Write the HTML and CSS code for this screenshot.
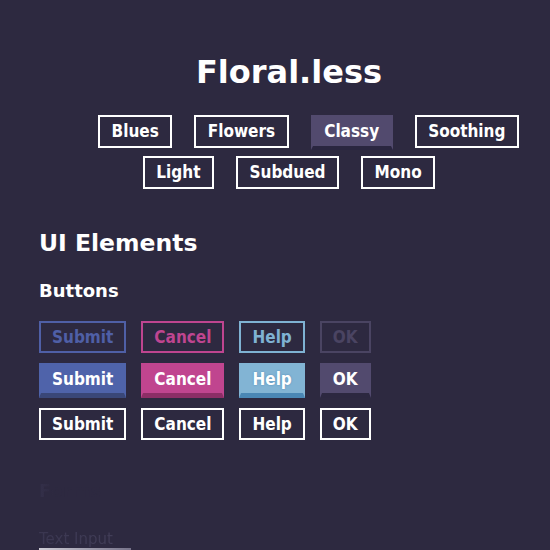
FILE: index.html
```html
<!DOCTYPE html>
<html lang="en">
<head>
<meta charset="utf-8">
<title>Floral.less</title>
<link rel="stylesheet" href="styles.css">
</head>
<body>
<div class="page">
  <h1 class="title">Floral.less</h1>
  <nav class="themes">
    <div class="theme-row theme-row-first">
      <a class="btn nav-btn">Blues</a>
      <a class="btn nav-btn">Flowers</a>
      <a class="btn nav-btn nav-active">Classy</a>
      <a class="btn nav-btn">Soothing</a>
    </div>
    <div class="theme-row">
      <a class="btn nav-btn">Light</a>
      <a class="btn nav-btn">Subdued</a>
      <a class="btn nav-btn">Mono</a>
    </div>
  </nav>

  <h2 class="section-title">UI Elements</h2>
  <h3 class="sub-title">Buttons</h3>
  <div class="button-rows">
    <div class="button-row">
      <button class="btn ui-btn outline submit">Submit</button>
      <button class="btn ui-btn outline cancel">Cancel</button>
      <button class="btn ui-btn outline help">Help</button>
      <button class="btn ui-btn outline ok">OK</button>
    </div>
    <div class="button-row">
      <button class="btn ui-btn filled submit">Submit</button>
      <button class="btn ui-btn filled cancel">Cancel</button>
      <button class="btn ui-btn filled help">Help</button>
      <button class="btn ui-btn filled ok">OK</button>
    </div>
    <div class="button-row">
      <button class="btn ui-btn plain">Submit</button>
      <button class="btn ui-btn plain">Cancel</button>
      <button class="btn ui-btn plain">Help</button>
      <button class="btn ui-btn plain">OK</button>
    </div>
  </div>

  <div class="forms">
    <h3 class="forms-title">Forms</h3>
    <label class="field-label">Text Input</label>
    <div class="field-line"></div>
  </div>
</div>
</body>
</html>
```

FILE: styles.css
```css
html, body {
  margin: 0;
  padding: 0;
  background: #2d2940;
}
body {
  font-family: "DejaVu Sans", "Liberation Sans", sans-serif;
  color: #ffffff;
  height: 550px;
  overflow: hidden;
}
.page {
  padding: 52px 11px 0 39px;
}
.title {
  margin: 0;
  font-size: 32px;
  line-height: 40px;
  font-weight: bold;
  text-align: center;
}
.themes {
  margin-top: 23px;
  display: flex;
  flex-direction: column;
  gap: 6px;
}
.theme-row {
  display: flex;
  justify-content: center;
  align-items: flex-start;
  gap: 22px;
}
.theme-row-first {
  padding-left: 39px;
}
.btn {
  font-family: "DejaVu Sans Condensed", "DejaVu Sans", "Liberation Sans", sans-serif;
  font-stretch: semi-condensed;
  font-weight: bold;
  font-size: 17px;
  color: #ffffff;
  background: transparent;
  border: 2px solid #ffffff;
  box-sizing: border-box;
  margin: 0;
  cursor: pointer;
  display: block;
}
.nav-btn {
  font-size: 17px;
  padding: 5px 11.5px;
  line-height: 19px;
}
.nav-active {
  background: #524a6e;
  border-color: #524a6e;
  border-bottom: 4px solid #2a2640;
}
.section-title {
  margin: 40px 0 0;
  font-size: 23.5px;
  line-height: 28px;
  font-weight: bold;
}
.sub-title {
  margin: 23px 0 0;
  font-size: 18px;
  line-height: 22px;
  font-weight: bold;
}
.button-rows {
  margin-top: 19px;
  display: flex;
  flex-direction: column;
  gap: 10px;
}
.button-row {
  display: flex;
  align-items: flex-start;
  gap: 15px;
}
.ui-btn {
  padding: 5px 11px;
  line-height: 18px;
}
.outline.submit { color: #4f5fa6; border-color: #4f5fa6; }
.outline.cancel { color: #bf4590; border-color: #bf4590; }
.outline.help { color: #7fb2d3; border-color: #7fb2d3; }
.outline.ok { color: #4a4462; border-color: #4a4462; }

.filled { border-bottom-width: 5px; }
.filled.submit { background: #4f63aa; border-color: #4f63aa; border-bottom-color: #3a4778; }
.filled.cancel { background: #c0458f; border-color: #c0458f; border-bottom-color: #8c2e66; }
.filled.help { background: #82b4d4; border-color: #82b4d4; border-bottom-color: #4a87b5; text-shadow: 0 0 2px #4a87b5; }
.filled.ok { background: #524a6e; border-color: #524a6e; border-bottom-color: #2c2840; }

.plain { color: #ffffff; border-color: #ffffff; }

.forms {
  margin-top: 40px;
}
.forms-title {
  margin: 0;
  font-size: 18px;
  line-height: 22px;
  font-weight: bold;
  background: linear-gradient(to right, #34304a 0, #2d2940 14px, #2d2940 100%);
  -webkit-background-clip: text;
  background-clip: text;
  color: transparent;
}
.field-label {
  display: block;
  margin-top: 28px;
  font-size: 15px;
  line-height: 18px;
  font-weight: normal;
  background: linear-gradient(to right, #3a3650, #6a667e);
  -webkit-background-clip: text;
  background-clip: text;
  color: transparent;
}
.field-line {
  height: 2px;
  width: 92px;
  background: linear-gradient(to right, #cfcdd6, #77738a);
}
```
